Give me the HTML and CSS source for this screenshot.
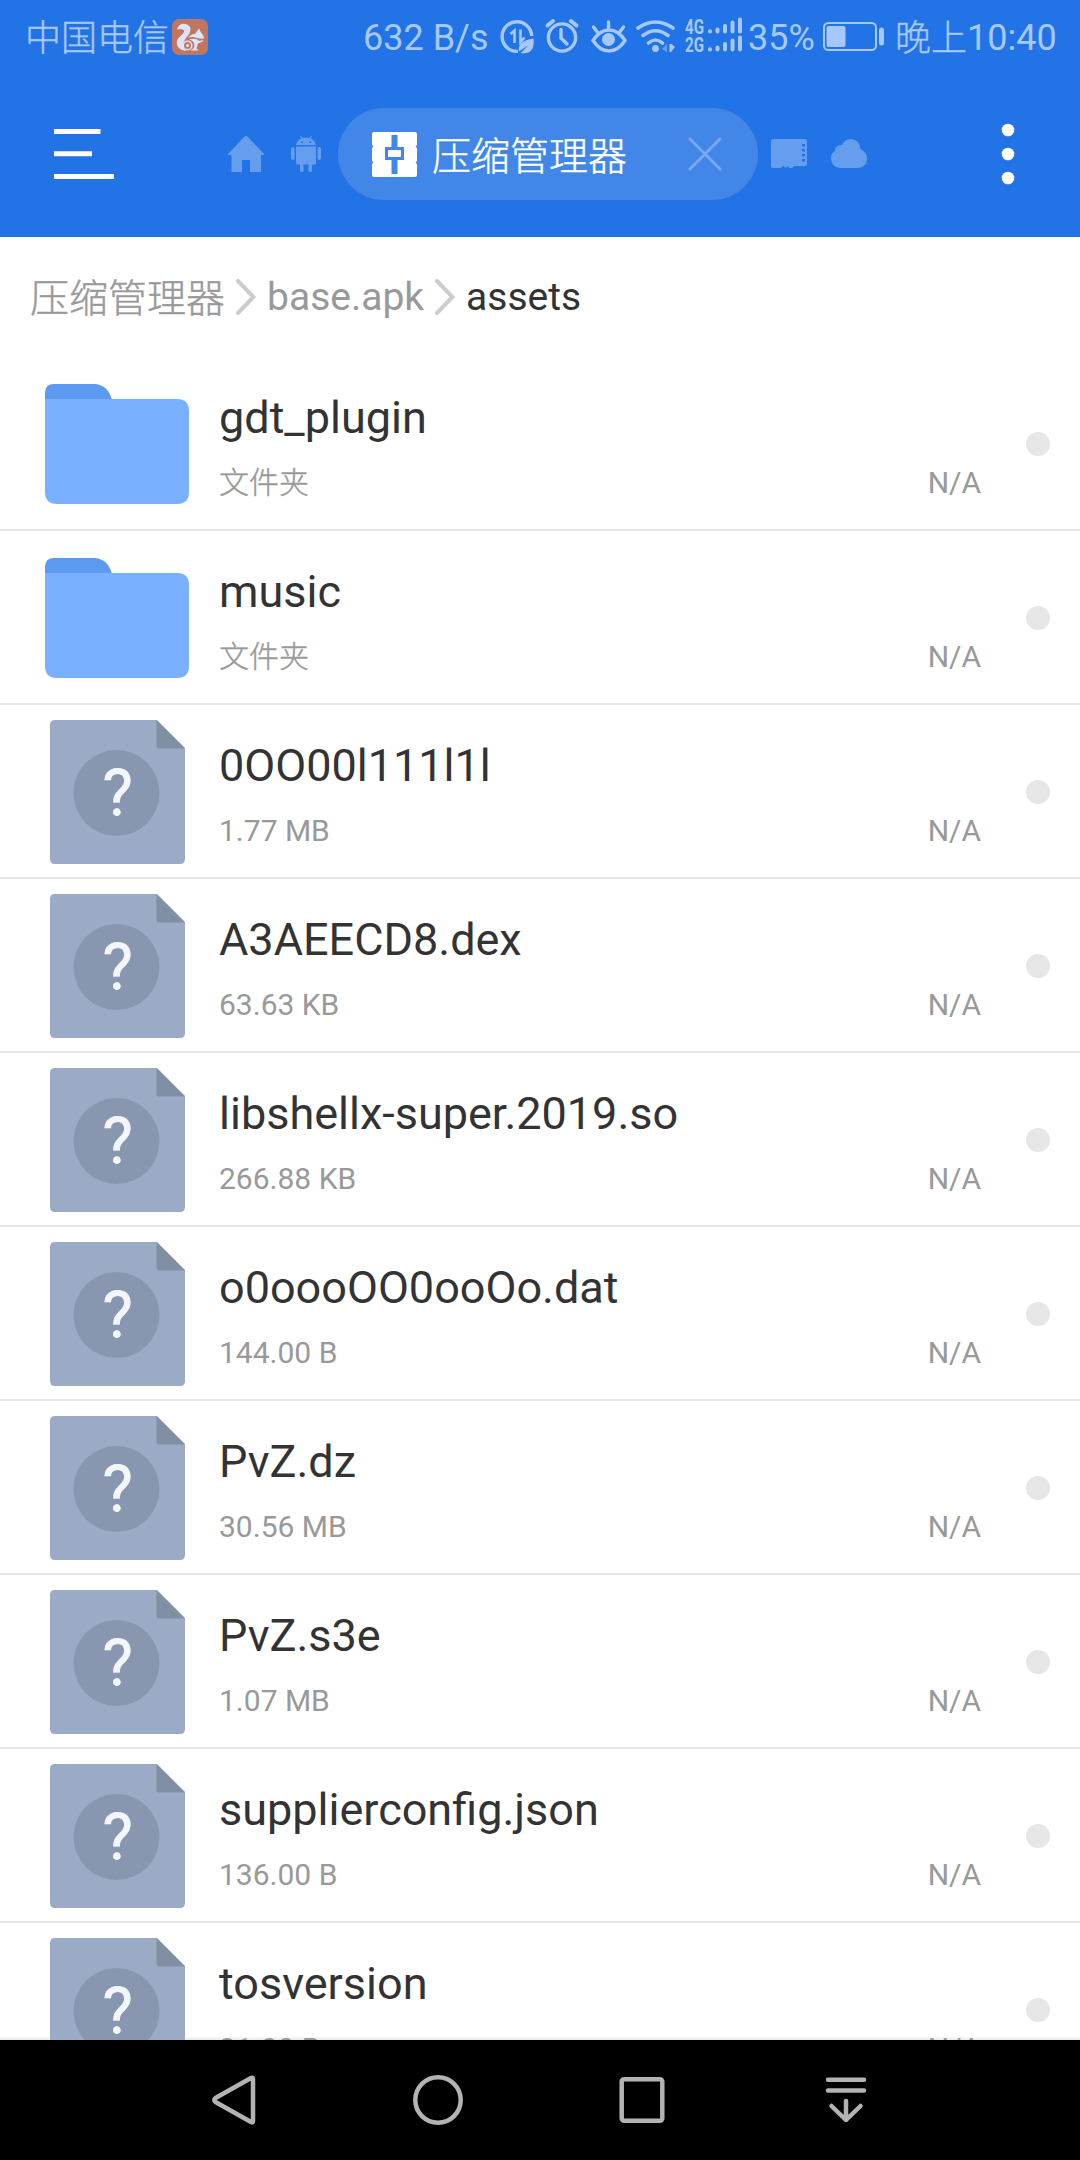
FILE: index.html
```html
<!DOCTYPE html>
<html lang="zh-CN">
<head>
<meta charset="utf-8">
<title>压缩管理器</title>
<link rel="stylesheet" href="styles.css">
</head>
<body>
<svg width="0" height="0" class="defs">
  <symbol id="folder" viewBox="0 0 144 120">
    <path d="M0 16V9Q0 0 9 0H50Q63 1 67 16Z" fill="#5c9af2"/>
    <path d="M0 15H132Q144 15 144 27V108Q144 120 132 120H12Q0 120 0 108Z" fill="#79b0ff"/>
  </symbol>
  <symbol id="file" viewBox="0 0 135 144">
    <path d="M5 0H107L135 28V139Q135 144 130 144H5Q0 144 0 139V5Q0 0 5 0Z" fill="#9babc5"/>
    <path d="M106.500 0L135 28.500H109Q106.500 28.500 106.500 26Z" fill="#808fa3"/>
    <circle cx="66.500" cy="73" r="43" fill="#8897af"/>
  </symbol>
</svg>
<header class="header">
  <div class="status">
    <span class="carrier">中国电信</span>
    <svg class="uc" width="36" height="36" viewBox="0 0 36 36">
      <rect width="36" height="36" rx="7" fill="#c2755f"/>
      <path d="M13 5C19 6 20 11 16.500 16C13 20 11.500 22 11.500 26C11.500 28 12.500 30 14 32C7 31 4 27 5 22C6 17 12 16 12 12C12 10 9 10 5 10.500C6 7 9 4 13 5Z" fill="#dce5f7"/>
      <path d="M23 15L27 9.500L29 13.500Q32 16 32 19.500Q27 20 23.500 18.500Q20 17.500 16.500 19Q19 14.500 23 15Z" fill="#dce5f7"/>
      <path d="M17 20.200Q25 18.500 27 22L32 21Q30 24 26 24.500L24.500 29.500L26.500 31.500H18.500L22 29Q24 22.500 17 20.200Z" fill="#dce5f7"/>
      <circle cx="15.500" cy="26.500" r="4.300" fill="none" stroke="#dce5f7" stroke-width="1.600"/>
      <circle cx="15.500" cy="26.500" r="1.500" fill="#dce5f7"/>
    </svg>
    <span class="speed">632 B/s</span>
    <svg class="indicators" width="242" height="40" viewBox="0 0 242 40" fill="none" stroke="#a7c8fa">
      <path d="M18 34.300A14.800 14.800 0 1 1 31.700 19" stroke-width="3.400"/>
      <path d="M10.500 17L14.500 13.500V26M20.500 12.500V25L24.500 20.500" stroke-width="2.600"/>
      <path d="M33.500 21.500Q35 35 25.500 36.300H20.500L28.500 28L19 34.500Q17 24 33.500 21.500Z" fill="#a7c8fa" stroke="none"/>
      <circle cx="62" cy="20.500" r="13.600" stroke-width="3.400"/>
      <path d="M61 12.500V21L67 27" stroke-width="3.400" stroke-linecap="round"/>
      <path d="M47.500 8.500L53 4M71 4L76.500 8.500" stroke-width="4" stroke-linecap="round"/>
      <path d="M93 23.500C102 9.500 116 9.500 125 23.500C116 37.500 102 37.500 93 23.500Z" stroke-width="3.400"/>
      <circle cx="108.500" cy="22.500" r="6.500" fill="#a7c8fa" stroke="none"/>
      <path d="M108.500 5V12M93.500 10L98 16M123.500 10L119 16" stroke-width="3.400" stroke-linecap="round"/>
      <path d="M138 11Q155.500-1 173 11M143 18.500Q155.500 9 168 18.500M148.500 26Q155.500 20 162.500 26" stroke-width="3.600" stroke-linecap="round"/>
      <circle cx="155.500" cy="31.500" r="3.400" fill="#a7c8fa" stroke="none"/>
      <path d="M162 32L167 27V35Z" fill="#6aa0f2" stroke="none"/>
      <path d="M169.500 27H171.500L175 30L171 35H169.500Z" fill="#a7c8fa" stroke="none"/>
      <g fill="#a7c8fa" stroke="none" class="net"><text x="185" y="17" textLength="19" lengthAdjust="spacingAndGlyphs">4G</text><text x="185" y="35" textLength="19" lengthAdjust="spacingAndGlyphs">2G</text></g>
      <path d="M210 14.300V14.600M217.500 12.500V14.600M225 9V14.600M232.500 5.500V14.600M240 2.500V14.600M210 32.300V32.600M217.500 30.500V32.600M225 27V32.600M232.500 23.500V32.600M240 20.500V32.600" stroke-width="4" stroke-linecap="round"/>
    </svg>
    <span class="percent">35%</span>
    <svg class="battery" width="62" height="30" viewBox="0 0 62 30"><rect x="1" y="1" width="52" height="27" rx="4.500" fill="none" stroke="#a7c8fa" stroke-width="2"/><rect x="3.500" y="4" width="19" height="21" rx="2" fill="#a7c8fa"/><rect x="56" y="5.500" width="5" height="18" rx="2.500" fill="#a7c8fa"/></svg>
    <span class="clock"><span class="period">晚上</span><span class="time">10:40</span></span>
  </div>
  <nav class="toolbar">
    <svg class="menu" width="60" height="50" viewBox="0 0 60 50" fill="#fff"><path d="M0 0H46.500V5H0ZM0 22.300H38V27.300H0ZM0 45H60V50H0Z"/></svg>
    <svg class="home" width="36" height="36" viewBox="0 0 36 36" fill="#659eef"><path d="M16 1Q18-1 20 1L36 18V19H33V36H22V24H14V36H3.500V19H0V18Z"/></svg>
    <svg class="droid" width="30" height="36" viewBox="0 0 30 36" fill="#659eef"><path fill-rule="evenodd" d="M5 9Q6 4 10.500 2.500L9 .500L10 0L11.700 2Q15 1 18.300 2L20 0L21 .500L19.500 2.500Q24 4 25 9ZM10 5.500V7H12V5.500ZM18 5.500V7H20V5.500Z"/><path d="M5 10.500H25V27Q25 28.500 23 28.500H21V34.500Q21 36 19.500 36Q17.500 36 17.500 34.500V28.500H12.500V34.500Q12.500 36 11 36Q9 36 9 34.500V28.500H7Q5 28.500 5 27ZM0 13Q0 11 1.800 11Q3.500 11 3.500 13V22Q3.500 24 1.800 24Q0 24 0 22ZM26.500 13Q26.500 11 28.200 11Q30 11 30 13V22Q30 24 28.200 24Q26.500 24 26.500 22Z"/></svg>
    <div class="tab">
      <svg width="45" height="45" viewBox="0 0 45 45"><path d="M2 0H43Q45 0 45 2V13L43.500 14.500L45 16V29L43.500 30.500L45 32V43Q45 45 43 45H2Q0 45 0 43V32L1.500 30.500L0 29V16L1.500 14.500L0 13V2Q0 0 2 0Z" fill="#fff"/><path d="M19.500 3H25.500V15H32V28H25.500V42H19.500V28H13V15H19.500ZM16 18V25H29V18Z" fill="#4287e8" fill-rule="evenodd"/></svg>
      <span class="tab-title">压缩管理器</span>
      <svg class="close" width="34" height="34" viewBox="0 0 34 34" fill="none" stroke="#78aaf0" stroke-width="2.600"><path d="M1 1L33 33M33 1L1 33"/></svg>
    </div>
    <svg class="card" width="36" height="30" viewBox="0 0 36 30"><path d="M2 0H34Q36 0 36 2V25Q36 27 34 27H23L21 29H18L17 27L15 29L12 27L10 29H2Q0 29 0 27V2Q0 0 2 0Z" fill="#659eef"/><path d="M31 5h3v2.500h-3zM31 10h3v2.500h-3zM31 15h3v2.500h-3zM31 20h3v2.500h-3z" fill="#2273e6"/></svg>
    <svg class="cloud" width="36" height="30" viewBox="0 0 36 30" fill="#659eef"><path d="M9 29Q0 28 0 19Q0 14 4 12Q4 6 11 6Q14 0 20 0Q28 0 29.500 10Q36 13 36 20Q36 28 27 29Z"/></svg>
    <svg class="more" width="14" height="62" viewBox="0 0 14 62" fill="#fff"><circle cx="7" cy="7" r="6.300"/><circle cx="7" cy="31" r="6.300"/><circle cx="7" cy="55" r="6.300"/></svg>
  </nav>
</header>
<div class="crumbs">
  <span class="root">压缩管理器</span>
  <svg width="20" height="36" viewBox="0 0 20 36"><path d="M2 2L17.500 18L2 34"/></svg>
  <span>base.apk</span>
  <svg width="20" height="36" viewBox="0 0 20 36"><path d="M2 2L17.500 18L2 34"/></svg>
  <span class="current">assets</span>
</div>
<main class="list">
  <div class="row"><svg class="icon folder"><use href="#folder"/></svg><div class="info"><div class="name">gdt_plugin</div><div class="meta"><span class="kind">文件夹</span><span>N/A</span></div></div><i class="dot"></i></div>
  <div class="row"><svg class="icon folder"><use href="#folder"/></svg><div class="info"><div class="name">music</div><div class="meta"><span class="kind">文件夹</span><span>N/A</span></div></div><i class="dot"></i></div>
  <div class="row"><svg class="icon"><use href="#file"/><text x="67.500" y="95" class="mark">?</text></svg><div class="info"><div class="name">0OO00l111l1l</div><div class="meta"><span>1.77 MB</span><span>N/A</span></div></div><i class="dot"></i></div>
  <div class="row"><svg class="icon"><use href="#file"/><text x="67.500" y="95" class="mark">?</text></svg><div class="info"><div class="name">A3AEECD8.dex</div><div class="meta"><span>63.63 KB</span><span>N/A</span></div></div><i class="dot"></i></div>
  <div class="row"><svg class="icon"><use href="#file"/><text x="67.500" y="95" class="mark">?</text></svg><div class="info"><div class="name">libshellx-super.2019.so</div><div class="meta"><span>266.88 KB</span><span>N/A</span></div></div><i class="dot"></i></div>
  <div class="row"><svg class="icon"><use href="#file"/><text x="67.500" y="95" class="mark">?</text></svg><div class="info"><div class="name">o0oooOO0ooOo.dat</div><div class="meta"><span>144.00 B</span><span>N/A</span></div></div><i class="dot"></i></div>
  <div class="row"><svg class="icon"><use href="#file"/><text x="67.500" y="95" class="mark">?</text></svg><div class="info"><div class="name">PvZ.dz</div><div class="meta"><span>30.56 MB</span><span>N/A</span></div></div><i class="dot"></i></div>
  <div class="row"><svg class="icon"><use href="#file"/><text x="67.500" y="95" class="mark">?</text></svg><div class="info"><div class="name">PvZ.s3e</div><div class="meta"><span>1.07 MB</span><span>N/A</span></div></div><i class="dot"></i></div>
  <div class="row"><svg class="icon"><use href="#file"/><text x="67.500" y="95" class="mark">?</text></svg><div class="info"><div class="name">supplierconfig.json</div><div class="meta"><span>136.00 B</span><span>N/A</span></div></div><i class="dot"></i></div>
  <div class="row"><svg class="icon"><use href="#file"/><text x="67.500" y="95" class="mark">?</text></svg><div class="info"><div class="name">tosversion</div><div class="meta"><span>31.00 B</span><span>N/A</span></div></div><i class="dot"></i></div>
</main>
<footer class="navbar">
  <svg viewBox="0 0 60 60"><path d="M47 8Q49 7 49 9V51Q49 53 47 52L11.500 32Q9 30 11.500 28Z"/></svg>
  <svg viewBox="0 0 60 60"><circle cx="30" cy="30" r="22.700"/></svg>
  <svg viewBox="0 0 60 60"><rect x="9.700" y="9.200" width="40.600" height="41.600" rx="2.500"/></svg>
  <svg viewBox="0 0 60 60"><path d="M12 9.700H48M12 20.500H48M30 31V50M15.500 36L30 50L44.500 36"/></svg>
</footer>
</body>
</html>
```
FILE: styles.css
```css
* { box-sizing: border-box; }

body {
  margin: 0;
  width: 1080px;
  height: 2160px;
  overflow: hidden;
  display: flex;
  flex-direction: column;
  background: #fff;
  font-family: Roboto, "Noto Sans CJK SC", sans-serif;
}

svg { display: block; flex: none; }
.defs { position: absolute; }

.header {
  height: 237px;
  flex: none;
  background: #2273e6;
}

.status {
  display: flex;
  align-items: center;
  height: 74px;
  padding-left: 25px;
  color: #a7c8fa;
  font-size: 36px;
  white-space: nowrap;
}

.carrier, .period, .tab-title, .root, .kind {
  font-weight: 300;
  -webkit-text-stroke: .4px currentColor;
}

.carrier { width: 144px; padding-bottom: 4px; }
.uc { margin-left: 3px; }
.speed { width: 126px; margin-left: 155px; padding-top: 2px; }
.indicators { margin-left: 11px; }
.net { font: bold 20px Roboto, sans-serif; }
.percent { width: 66px; margin-left: 6px; padding-top: 2px; }
.battery { margin-left: 9px; }
.clock { display: flex; align-items: center; margin-left: 10px; }
.period { padding-bottom: 4px; }
.time { padding-top: 2px; }

.toolbar {
  display: flex;
  align-items: center;
  height: 92px;
  margin-top: 34px;
  padding-left: 54px;
}

.home { margin-left: 114px; }
.droid { margin-left: 27px; }

.tab {
  display: flex;
  align-items: center;
  width: 420px;
  height: 92px;
  margin-left: 17px;
  padding-left: 34px;
  border-radius: 46px;
  background: #4287e8;
}

.tab-title {
  width: 195px;
  margin-left: 15px;
  padding-bottom: 2px;
  color: #fff;
  font-size: 39px;
  white-space: nowrap;
}

.close { margin-left: 61px; }
.card { margin-left: 13px; }
.cloud { margin-left: 24px; }
.more { margin-left: 134px; }

.crumbs {
  display: flex;
  align-items: center;
  height: 120px;
  flex: none;
  padding-left: 30px;
  color: #999;
  font-size: 39px;
  white-space: nowrap;
}

.crumbs svg {
  margin: 0 11px 0 11px;
  fill: none;
  stroke: #ccc;
  stroke-width: 4;
  stroke-linecap: round;
}

.crumbs .root { padding-bottom: 4px; }
.crumbs .current { color: #333; }

.list {
  flex: 1;
  min-height: 0;
  overflow: hidden;
  background: linear-gradient(#fff, #e8e8e8) bottom / 100% 4px no-repeat;
}

.row {
  display: flex;
  height: 174px;
  border-bottom: 2px solid #e6e6e6;
}

.icon {
  width: 135px;
  height: 144px;
  margin: 15px 34px 0 50px;
}

.icon.folder {
  width: 144px;
  height: 120px;
  margin: 27px 30px 0 45px;
}

.mark {
  fill: #f3f7fd;
  stroke: #f3f7fd;
  stroke-width: .8;
  font: 64px Roboto, sans-serif;
  text-anchor: middle;
}

.info { width: 762px; }

.name {
  height: 60px;
  margin-top: 31px;
  color: #333;
  font-size: 45px;
  line-height: 60px;
}

.meta {
  display: flex;
  justify-content: space-between;
  margin-top: 15px;
  color: #999;
  font-size: 30px;
  line-height: 40px;
}

.dot {
  width: 24px;
  height: 24px;
  margin: 75px 0 0 45px;
  border-radius: 50%;
  background: #e6e6e6;
}

.navbar {
  display: flex;
  justify-content: center;
  gap: 144px;
  height: 120px;
  flex: none;
  padding-top: 30px;
  background: #000;
}

.navbar svg {
  width: 60px;
  height: 60px;
  fill: none;
  stroke: #b3b3b3;
  stroke-width: 4.5;
  stroke-linecap: round;
  stroke-linejoin: round;
}
```
